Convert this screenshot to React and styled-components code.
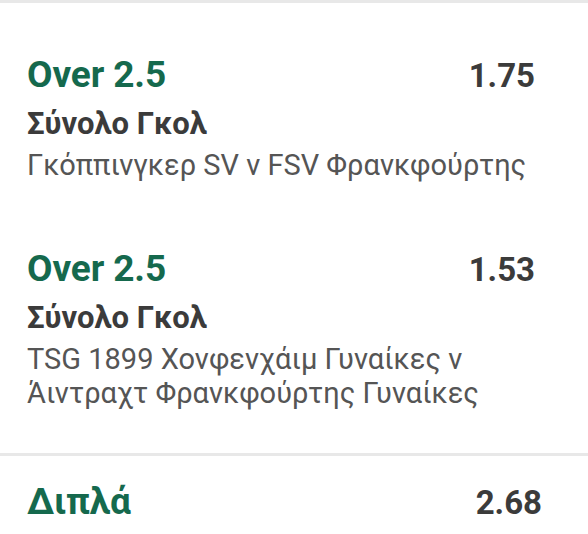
import React from "react";
import styled, { createGlobalStyle } from "styled-components";

const Global = createGlobalStyle`
  html, body { margin: 0; padding: 0; background: #fff; }
  body { font-family: Roboto, "Noto Sans", sans-serif; width: 588px; height: 534px; overflow: hidden; }
`;

const Page = styled.div`
  width: 588px;
  border-top: 3px solid #e8e8e8;
  box-sizing: border-box;
`;

const List = styled.div`
  display: flex;
  flex-direction: column;
  padding: 50px 53px 0 27px;
  gap: 65px;
`;

const Selection = styled.div`
  display: flex;
  flex-direction: column;
`;

const TopRow = styled.div`
  display: flex;
  justify-content: space-between;
  align-items: baseline;
`;

const Market = styled.div`
  color: #15694d;
  font-weight: 700;
  font-size: 37px;
  line-height: 44px;
  letter-spacing: -0.1px;
`;

const Odds = styled.div`
  color: #3b3b3b;
  font-weight: 700;
  font-size: 33px;
  line-height: 44px;
`;

const MarketType = styled.div`
  color: #3b3b3b;
  font-weight: 700;
  font-size: 31px;
  line-height: 40px;
  margin-top: 6px;
`;

const Events = styled.div`
  margin-top: 4px;
  display: flex;
  flex-direction: column;
`;

const EventLine = styled.div`
  color: #555;
  font-size: 29px;
  line-height: 34px;
`;

const Divider = styled.div`
  height: 3px;
  background: #e8e8e8;
  margin-top: 43px;
`;

const Footer = styled.div`
  display: flex;
  justify-content: space-between;
  align-items: baseline;
  padding: 24px 46px 0 27px;
`;

const bets = [
  { market: "Over 2.5", odds: "1.75", type: "Σύνολο Γκολ", event: ["Γκόππινγκερ SV v FSV Φρανκφούρτης"] },
  {
    market: "Over 2.5",
    odds: "1.53",
    type: "Σύνολο Γκολ",
    event: ["TSG 1899 Χονφενχάιμ Γυναίκες v", "Άιντραχτ Φρανκφούρτης Γυναίκες"],
  },
];

export default function App() {
  return (
    <>
      <Global />
      <Page>
        <List>
          {bets.map((b, i) => (
            <Selection key={i}>
              <TopRow>
                <Market>{b.market}</Market>
                <Odds>{b.odds}</Odds>
              </TopRow>
              <MarketType>{b.type}</MarketType>
              <Events>
                {b.event.map((l, j) => (
                  <EventLine key={j}>{l}</EventLine>
                ))}
              </Events>
            </Selection>
          ))}
        </List>
        <Divider />
        <Footer>
          <Market>Διπλά</Market>
          <Odds>2.68</Odds>
        </Footer>
      </Page>
    </>
  );
}
